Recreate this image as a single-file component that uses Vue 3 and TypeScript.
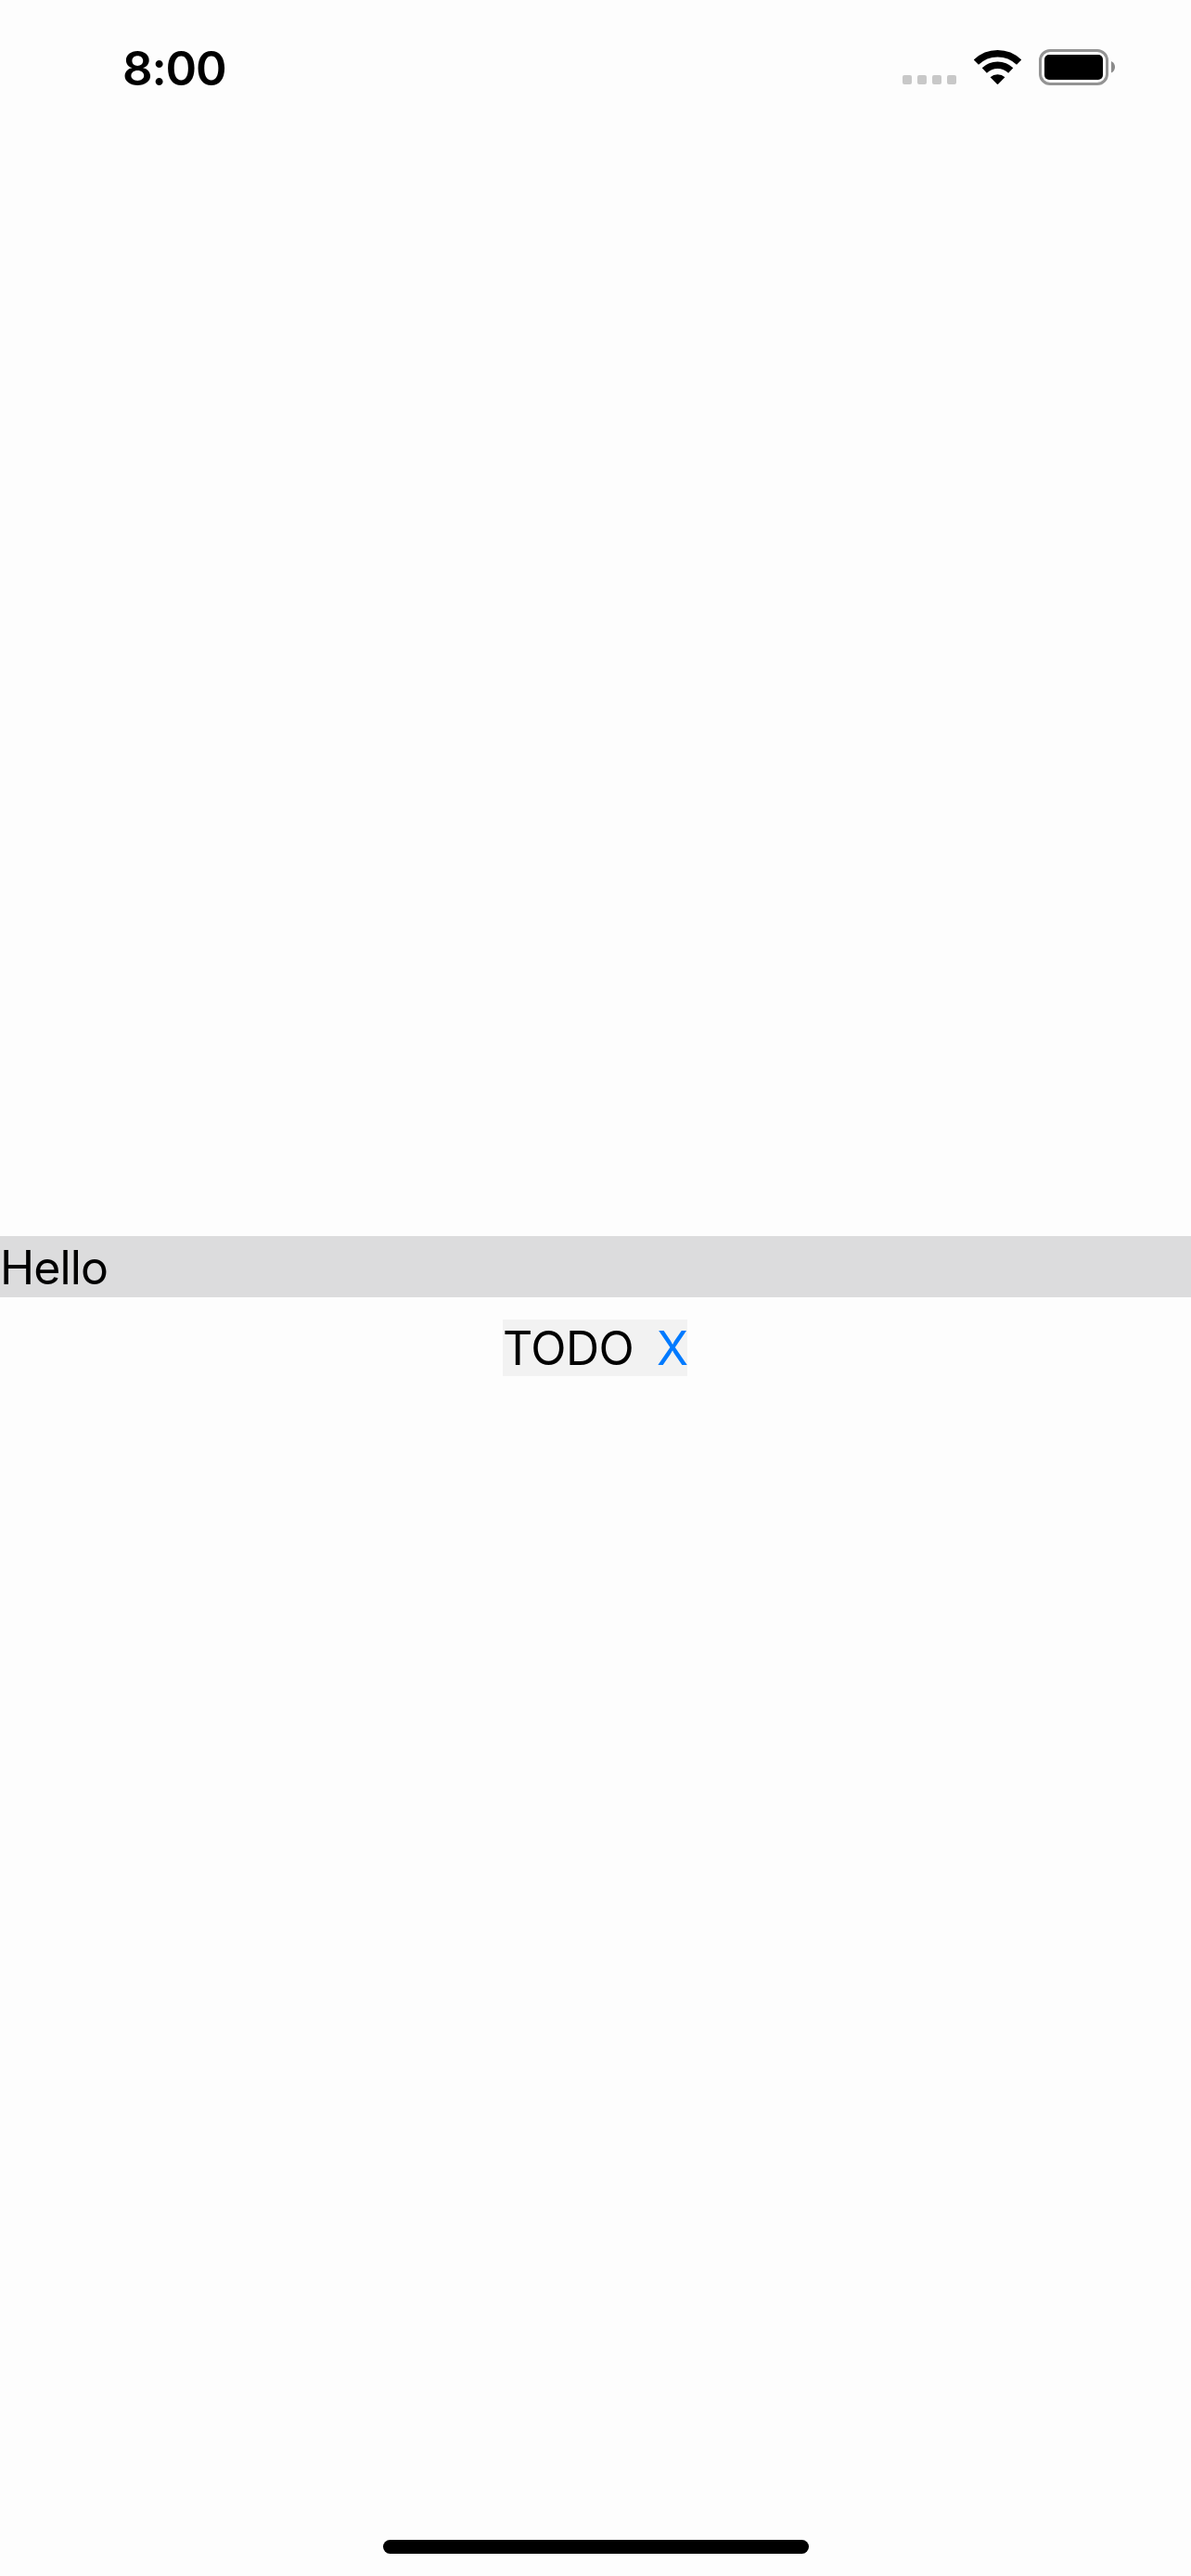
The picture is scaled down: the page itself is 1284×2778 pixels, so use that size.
<script setup lang="ts">
import { ref } from 'vue'

interface Todo {
  id: number
  title: string
}

const time = '8:00'
const draft = ref('Hello')
const todos = ref<Todo[]>([{ id: 1, title: 'TODO' }])

function remove(id: number): void {
  todos.value = todos.value.filter((todo) => todo.id !== id)
}
</script>

<template>
  <div class="screen">
    <header class="status-bar">
      <span class="time">{{ time }}</span>
      <div class="indicators">
        <div class="signal">
          <span v-for="n in 4" :key="n" class="signal-dot"></span>
        </div>
        <svg class="wifi" width="51" height="38" viewBox="0 0 51 38" aria-hidden="true">
          <path d="M2.4 13.2 A33 33 0 0 1 48.6 13.2" fill="none" stroke="#000" stroke-width="7.4" />
          <path d="M11.3 22 A20.3 20.3 0 0 1 39.7 22" fill="none" stroke="#000" stroke-width="7.4" />
          <path d="M17.6 29.3 A12 12 0 0 1 33.4 29.3 L26.3 36.6 Q25.5 37.4 24.7 36.6 Z" fill="#000" />
        </svg>
        <svg class="battery" width="83" height="39" viewBox="0 0 83 39" aria-hidden="true">
          <rect x="1.5" y="1.5" width="72" height="36" rx="10.5" fill="none" stroke="#939393" stroke-width="3" />
          <rect x="6" y="6" width="63" height="27" rx="5" fill="#000" />
          <path d="M78 13 Q82 15 82 19.2 Q82 23.5 78 25.5 Z" fill="#8b8b8b" />
        </svg>
      </div>
    </header>

    <main class="content">
      <div class="field">{{ draft }}</div>
      <div v-for="todo in todos" :key="todo.id" class="todo">
        <span class="title">{{ todo.title }}</span>
        <span class="remove" role="button" @click="remove(todo.id)">X</span>
      </div>
    </main>

    <footer class="home">
      <div class="home-indicator"></div>
    </footer>
  </div>
</template>

<style>
body {
  margin: 0;
  background: #fdfdfd;
}
</style>

<style scoped>
.screen {
  display: flex;
  flex-direction: column;
  box-sizing: border-box;
  width: 1284px;
  height: 2778px;
  overflow: hidden;
  background: #fdfdfd;
  color: #000;
  font-family: Inter, 'Liberation Sans', sans-serif;
  font-size: 50px;
}

.status-bar {
  display: flex;
  justify-content: space-between;
  box-sizing: border-box;
  height: 141px;
  padding: 43px 81px 0 132px;
}

.time {
  height: 60px;
  line-height: 61px;
  font-size: 51px;
  font-weight: 600;
  letter-spacing: -1.2px;
}

.indicators {
  display: flex;
  align-items: flex-start;
  padding-top: 10px;
}

.signal {
  display: flex;
  gap: 6px;
  padding-top: 28px;
}

.signal-dot {
  width: 10px;
  height: 10px;
  border-radius: 2px;
  background: #c8c8c8;
}

.wifi {
  margin: 1px 19px 0;
}

.content {
  display: flex;
  flex: 1;
  flex-direction: column;
  align-items: center;
  justify-content: center;
  gap: 24px;
  padding-bottom: 63px;
}

.field {
  box-sizing: border-box;
  width: 100%;
  height: 66px;
  line-height: 68px;
  letter-spacing: -0.9px;
  background: #dcdcdd;
}

.todo {
  display: flex;
  justify-content: space-between;
  box-sizing: border-box;
  width: 199px;
  height: 61px;
  margin-right: 1px;
  line-height: 62px;
  background: #f2f2f2;
}

.title {
  letter-spacing: -0.5px;
}

.remove {
  color: #007aff;
  letter-spacing: -1px;
}

.home {
  display: flex;
  justify-content: center;
  height: 39px;
}

.home-indicator {
  width: 459px;
  height: 15px;
  margin-left: 1px;
  border-radius: 8px;
  background: #000;
}
</style>
